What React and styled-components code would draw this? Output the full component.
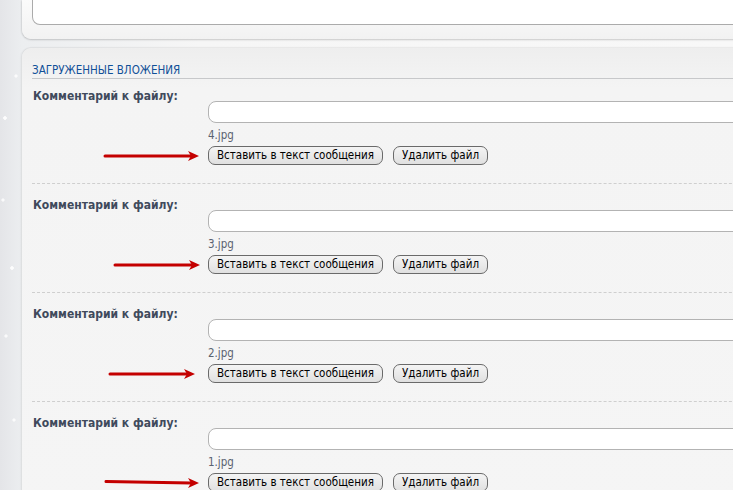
import React from "react";
import styled, { createGlobalStyle } from "styled-components";

const GlobalStyle = createGlobalStyle`
  html, body {
    margin: 0;
    padding: 0;
    overflow: hidden;
  }
  body {
    background: #e7e8eb;
    font-family: "DejaVu Sans Condensed", "DejaVu Sans", Verdana, sans-serif;
  }
`;

const files = [
  { name: "4.jpg", arrow: { left: -104, width: 96, tilt: 0 } },
  { name: "3.jpg", arrow: { left: -94, width: 87, tilt: 0 } },
  { name: "2.jpg", arrow: { left: -99, width: 87, tilt: 0 } },
  { name: "1.jpg", arrow: { left: -103, width: 95, tilt: 3 } },
];

const Arrow = ({ left, width, tilt }) => (
  <ArrowSvg
    style={{ left, width }}
    width={width}
    height="14"
    viewBox={`0 0 ${width} 14`}
  >
    <path
      d={`M1 ${7 - tilt / 2} L${width - 9} 7`}
      stroke="#c40000"
      strokeWidth="3"
      strokeLinecap="round"
      fill="none"
    />
    <path d={`M${width - 12} 2 L${width - 1} 7 L${width - 12} 12 L${width - 9} 7 Z`} fill="#c40000" />
  </ArrowSvg>
);

const Attachment = ({ name, arrow }) => (
  <Row>
    <Label>Комментарий к файлу:</Label>
    <Field>
      <Input type="text" />
      <FileName>{name}</FileName>
      <Actions>
        <Arrow {...arrow} />
        <Button>Вставить в текст сообщения</Button>
        <Button>Удалить файл</Button>
      </Actions>
    </Field>
  </Row>
);

export default function App() {
  return (
    <Page>
      <GlobalStyle />
      <Column>
        <TopPanel>
          <MessageBox />
        </TopPanel>
        <Panel>
          <Heading>Загруженные вложения</Heading>
          {files.map((f) => (
            <Attachment key={f.name} name={f.name} arrow={f.arrow} />
          ))}
        </Panel>
      </Column>
    </Page>
  );
}

const Page = styled.div`
  width: 100vw;
  height: 490px;
  overflow: hidden;
  padding-left: 22px;
  box-sizing: border-box;
  background:
    radial-gradient(circle at 5px 118px, rgba(255,255,255,0.9) 0 1.5px, transparent 2px),
    radial-gradient(circle at 16px 76px, rgba(255,255,255,0.8) 0 1.2px, transparent 2px),
    radial-gradient(circle at 3px 200px, rgba(255,255,255,0.8) 0 1.2px, transparent 2px),
    radial-gradient(circle at 12px 268px, rgba(255,255,255,0.9) 0 1.5px, transparent 2px),
    radial-gradient(circle at 6px 336px, rgba(255,255,255,0.8) 0 1.2px, transparent 2px),
    radial-gradient(circle at 14px 420px, rgba(255,255,255,0.8) 0 1.2px, transparent 2px),
    linear-gradient(90deg, #e4e5e8 0, #eceef0 22px, #f6f6f6 200px, #f8f8f8 100%);
`;

const Column = styled.div`
  width: 740px;
  display: flex;
  flex-direction: column;
  gap: 9px;
`;

const TopPanel = styled.div`
  height: 39px;
  box-sizing: border-box;
  padding: 0 0 0 10px;
  background: linear-gradient(#fbfbfb, #f2f2f2);
  border-radius: 0 0 0 9px;
  box-shadow: 0 1px 2px rgba(0, 0, 0, 0.18), -1px 0 2px rgba(0, 0, 0, 0.06);
`;

const MessageBox = styled.div`
  height: 24px;
  background: #fff;
  border: 1px solid #ababab;
  border-top: none;
  border-radius: 0 0 0 8px;
`;

const Panel = styled.div`
  padding: 15px 0 0 10px;
  min-height: 460px;
  background: linear-gradient(#eeeeee, #f4f4f4 40px, #f5f5f5);
  border-radius: 9px 0 0 0;
  box-shadow: -1px 0 2px rgba(0, 0, 0, 0.08), 0 -1px 1px rgba(0, 0, 0, 0.04);
`;

const Heading = styled.div`
  font-size: 11.5px;
  line-height: 14px;
  text-transform: uppercase;
  color: #115098;
  padding-bottom: 1px;
  border-bottom: 1px solid #c7c8ca;
`;

const Row = styled.div`
  padding: 10px 0 18px;

  & + & {
    border-top: 1px dashed #cfcfcf;
    padding-top: 14px;
  }
`;

const Label = styled.div`
  font-size: 12px;
  font-weight: bold;
  line-height: 12px;
  padding: 1px 0 0 1px;
  margin-bottom: -1px;
  color: #404a5c;
`;

const Field = styled.div`
  margin-left: 176px;
  display: flex;
  flex-direction: column;
  align-items: flex-start;
`;

const Input = styled.input`
  width: 100%;
  height: 22px;
  box-sizing: border-box;
  margin: 0;
  border: 1px solid #b3b3b3;
  border-radius: 8px;
  background: #fff;
  outline: none;
`;

const FileName = styled.div`
  margin-top: 5px;
  font-size: 11.5px;
  line-height: 14px;
  color: #5a6270;
`;

const Actions = styled.div`
  position: relative;
  margin-top: 4px;
  display: flex;
  gap: 10px;
`;

const Button = styled.button`
  height: 19px;
  padding: 0 8px;
  font-family: inherit;
  font-size: 11.5px;
  line-height: 17px;
  color: #000;
  border: 1px solid #6a6a6a;
  border-radius: 7px;
  background: linear-gradient(#f4f4f4, #e0e0e0);
  cursor: pointer;
`;

const ArrowSvg = styled.svg`
  position: absolute;
  top: 3px;
  overflow: visible;
`;
